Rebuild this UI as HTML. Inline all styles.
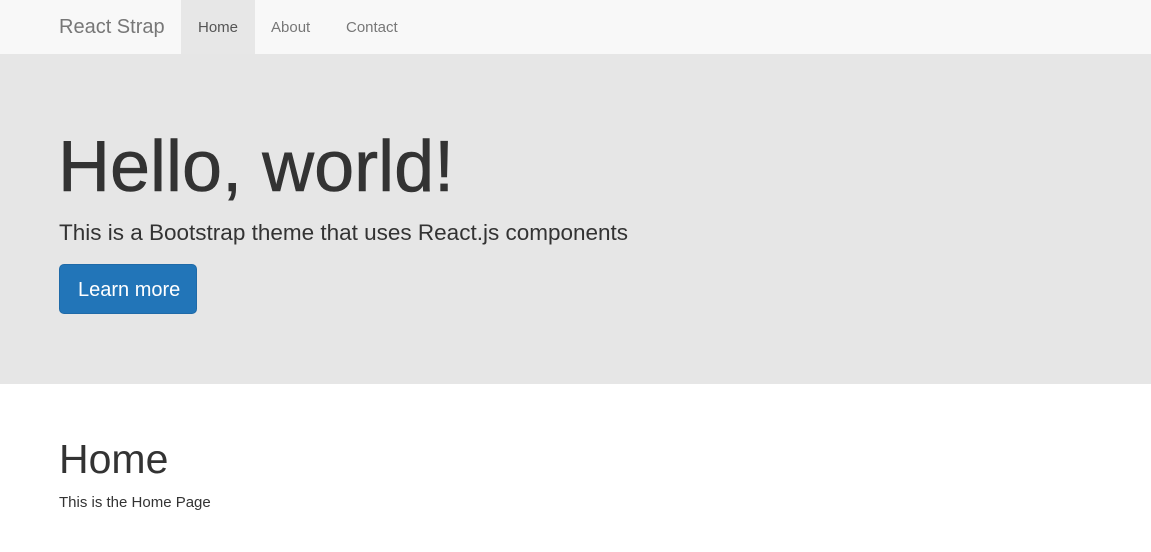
<!DOCTYPE html>
<html><head><style>
body{margin:0;width:1151px;height:552px;overflow:hidden;background:#fff;font-family:"Liberation Sans",Arial,sans-serif;color:#333;position:relative}
.nav{position:absolute;left:0;top:0;width:1151px;height:54px;background:#f8f8f8}
.t{position:absolute;white-space:nowrap;line-height:1}
.jumbo{position:absolute;left:0;top:54px;width:1151px;height:330px;background:#e6e6e6}
.active{position:absolute;left:181px;top:0;width:74px;height:54px;background:#e7e7e7}
.btn{position:absolute;left:59px;top:264px;width:138px;height:50px;background:#2275b8;border-radius:5px;border:1px solid #1f6aa8;box-sizing:border-box}
</style></head><body>
<div class="nav"></div>
<div class="active"></div>
<div class="t" style="left:59px;top:17px;font-size:20px;color:#777">React Strap</div>
<div class="t" style="left:198px;top:20px;font-size:15px;color:#555">Home</div>
<div class="t" style="left:271px;top:20px;font-size:15px;color:#777">About</div>
<div class="t" style="left:346px;top:20px;font-size:15px;color:#777">Contact</div>
<div class="jumbo"></div>
<div class="t" style="left:58px;top:131px;font-size:72px;color:#333;-webkit-text-stroke:0.6px #333">Hello, world!</div>
<div class="t" style="left:59px;top:222px;font-size:22.5px;color:#333">This is a Bootstrap theme that uses React.js components</div>
<div class="btn"></div>
<div class="t" style="left:78px;top:280px;font-size:20px;color:#fff">Learn more</div>
<div class="t" style="left:59px;top:439px;font-size:41px;color:#333">Home</div>
<div class="t" style="left:59px;top:495px;font-size:15px;color:#333">This is the Home Page</div>
</body></html>
